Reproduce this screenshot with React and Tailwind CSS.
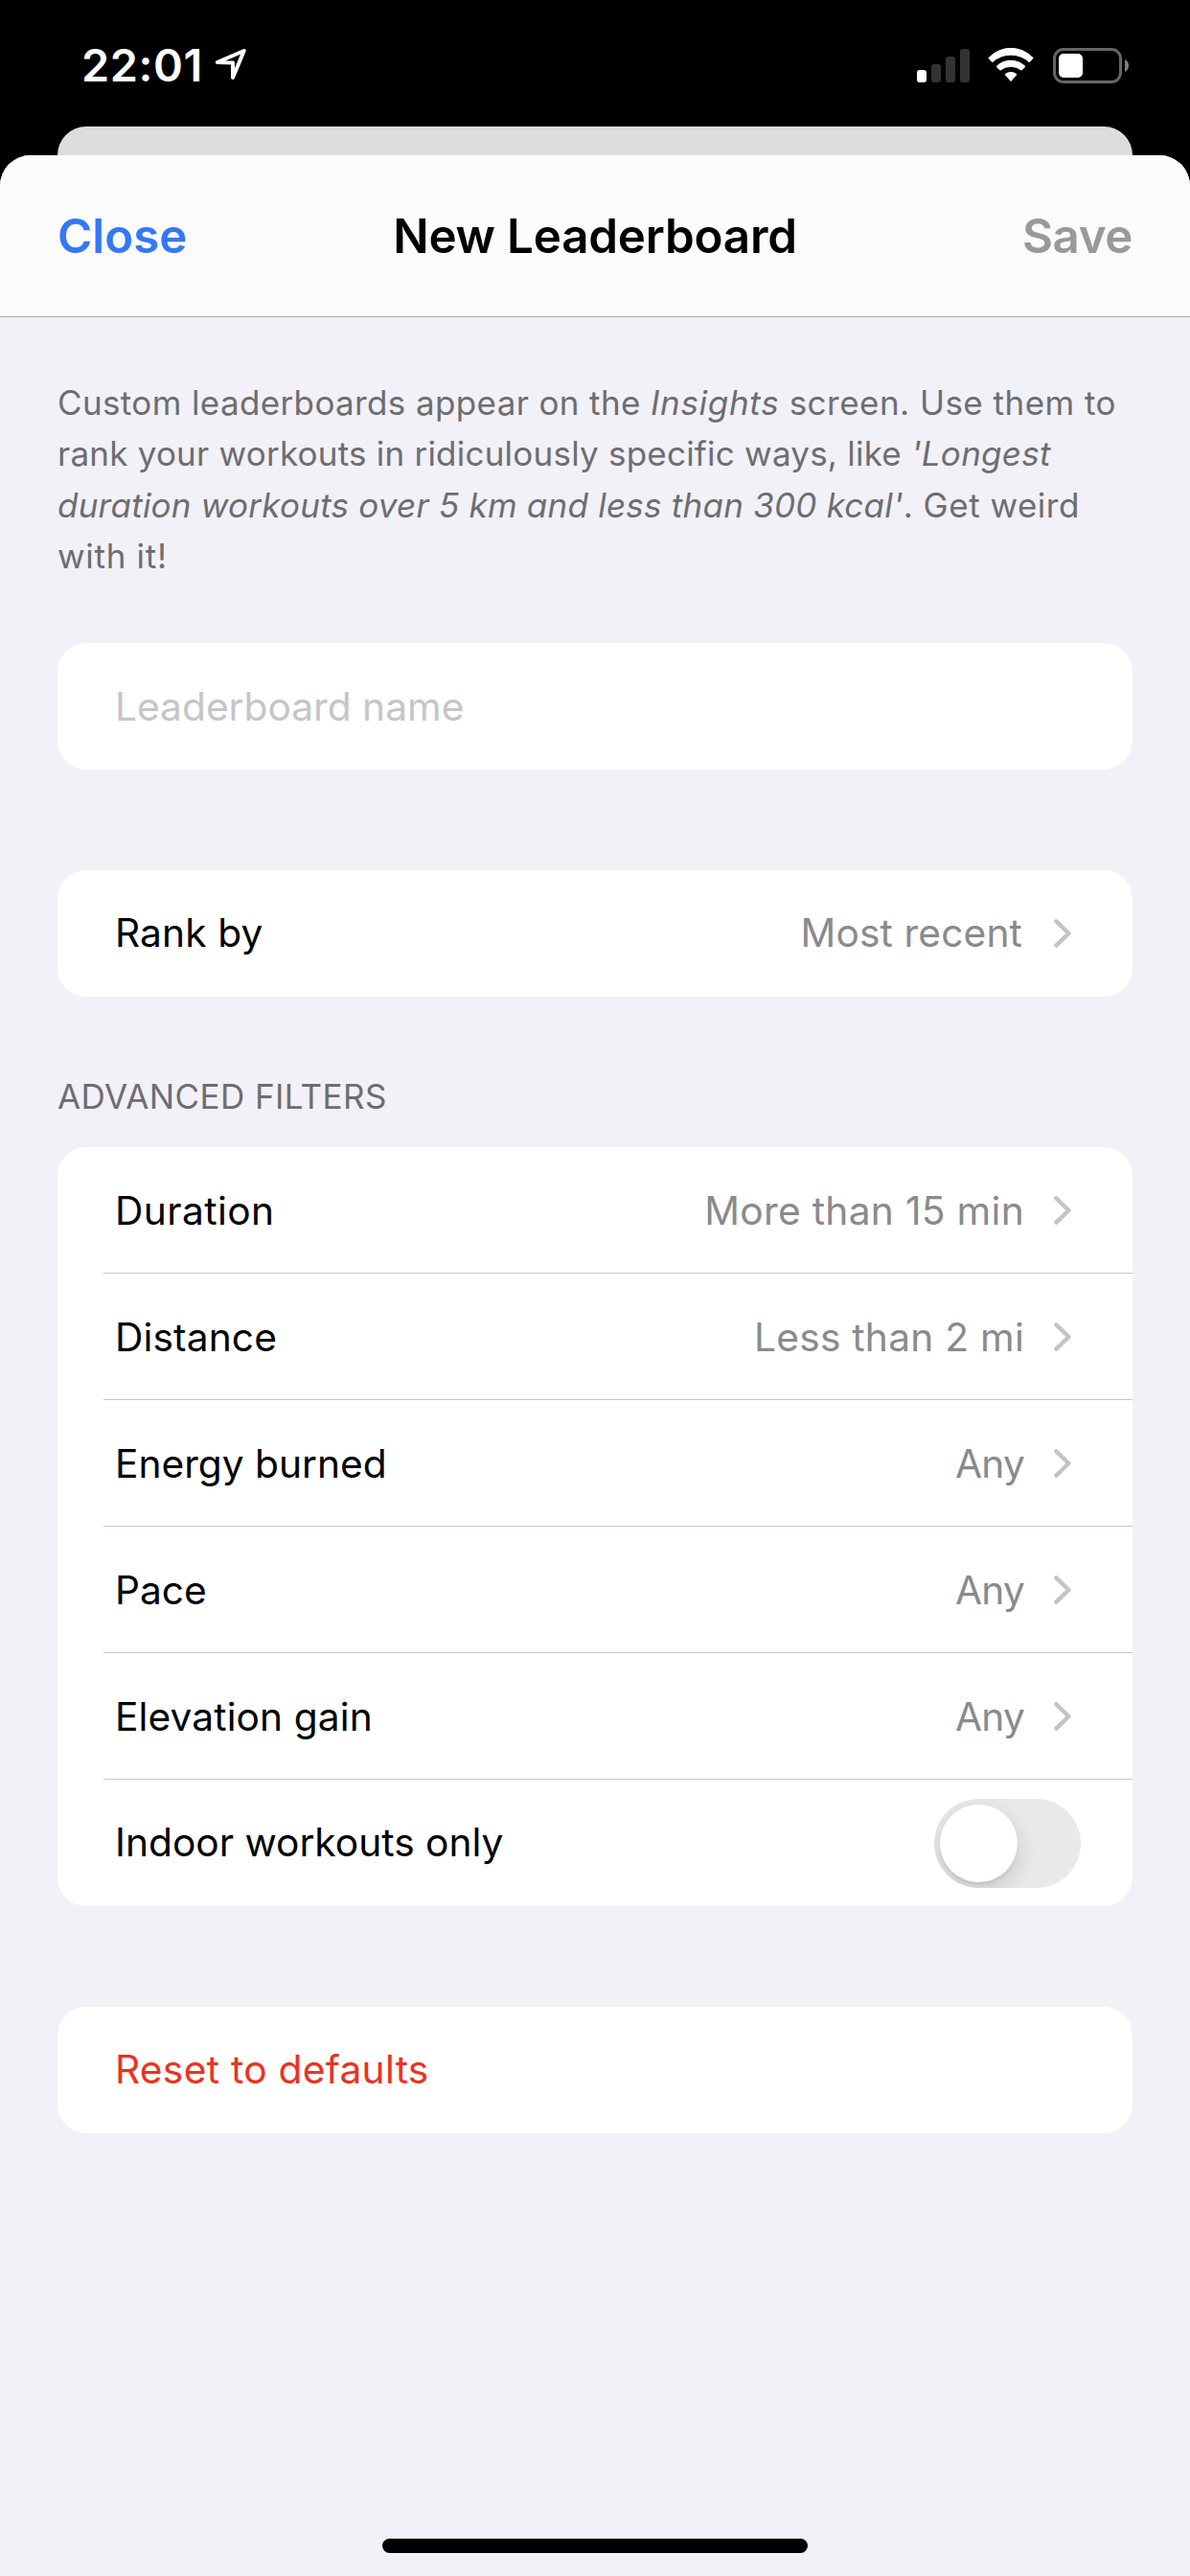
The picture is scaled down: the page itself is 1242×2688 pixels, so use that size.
import React from "react";

function LocationIcon() {
  return (
    <svg width="60" height="60" viewBox="0 0 60 60" fill="none" className="-ml-[1px]">
      <path
        d="M43.7 13 L15.8 25 L32 25.4 L32 41 Z"
        stroke="white"
        strokeWidth="4"
        strokeLinejoin="round"
      />
    </svg>
  );
}

function SignalIcon() {
  return (
    <div className="flex items-end gap-[5px]">
      <div className="h-[13px] w-[10px] rounded-[3px] bg-white" />
      <div className="h-[19px] w-[10px] rounded-[3px] bg-[#333333]" />
      <div className="h-[27px] w-[10px] rounded-[3px] bg-[#333333]" />
      <div className="h-[35px] w-[10px] rounded-[3px] bg-[#333333]" />
    </div>
  );
}

function WifiIcon() {
  return (
    <svg width="48" height="36" viewBox="0 0 48 36" fill="white" stroke="white" strokeWidth="1" strokeLinejoin="round">
      <path d="M0.8 10.6 A31.4 31.4 0 0 1 47.2 10.6 L43.4 14.7 A28.8 28.8 0 0 0 4.6 14.7 Z" />
      <path d="M9 19.4 A21.4 21.4 0 0 1 39 19.4 L35.1 23.2 A18 18 0 0 0 12.9 23.2 Z" />
      <path d="M18 27.6 A9.6 9.6 0 0 1 30 27.6 L24 34.6 Z" />
    </svg>
  );
}

function BatteryIcon() {
  return (
    <div className="flex items-center gap-[3px]">
      <div className="flex h-[37px] w-[72px] items-center rounded-[11px] border-[3px] border-[#666666] pl-[3px]">
        <div className="h-[25px] w-[25px] rounded-[5px] bg-white" />
      </div>
      <svg width="4" height="13" viewBox="0 0 4 13" fill="#808080">
        <path d="M0 0 C2.4 1 4 3.4 4 6.5 C4 9.6 2.4 12 0 13 Z" />
      </svg>
    </div>
  );
}

function StatusBar() {
  return (
    <div className="flex h-[132px] items-start justify-between pr-16 pl-[85px]">
      <div className="flex h-[136px] items-center text-white">
        <span className="text-[46.8px] font-semibold tracking-[0.57px]">22:01</span>
        <div className="mt-1">
          <LocationIcon />
        </div>
      </div>
      <div className="flex h-[136px] items-center">
        <div className="mr-[19px]">
          <SignalIcon />
        </div>
        <div className="mr-[20px]">
          <WifiIcon />
        </div>
        <BatteryIcon />
      </div>
    </div>
  );
}

function Header() {
  return (
    <header className="grid h-[169px] grid-cols-[1fr_auto_1fr] items-center rounded-t-[32px] border-b border-[#a9a9ad] bg-[#fbfbfc] px-[60px] text-[49.3px] font-semibold">
      <button className="mt-[2px] justify-self-start text-[#3478f6]">Close</button>
      <h1 className="mt-[1px] tracking-[-0.19px] text-black">New Leaderboard</h1>
      <button className="mt-[2px] justify-self-end tracking-[-0.4px] text-[#999999]">Save</button>
    </header>
  );
}

function Intro() {
  return (
    <p className="h-[277px] text-[35px] leading-[53.33px] whitespace-pre text-[#6d6d72]">
      <span className="tracking-[0.37px]">Custom leaderboards appear on the </span>
      <em className="tracking-[0.7px]">Insights</em>
      <span className="tracking-[0.47px]"> screen. Use them to</span>
      <br />
      <span className="tracking-[0.225px]">rank your workouts in ridiculously specific ways, like </span>
      <em className="tracking-[0.28px]">'Longest</em>
      <br />
      <em className="tracking-[0.23px]">duration workouts over 5 km and less than 300 kcal'</em>
      <span className="tracking-[0.5px]">. Get weird</span>
      <br />
      <span className="tracking-[0.7px]">with it!</span>
    </p>
  );
}

function Card({ children, className = "" }) {
  return <section className={"rounded-[30px] bg-white text-[40.7px] " + className}>{children}</section>;
}

function Chevron() {
  return (
    <svg width="18" height="30" viewBox="0 0 18 30" fill="none" className="ml-[31px]">
      <path d="M2.4 2.4 L15.4 15 L2.4 27.6" stroke="#c4c4c6" strokeWidth="4.4" strokeLinecap="round" strokeLinejoin="round" />
    </svg>
  );
}

function Toggle() {
  return (
    <div role="switch" aria-checked="false" className="mt-[1px] flex h-[93px] w-[153px] items-center overflow-hidden rounded-full bg-[#e9e9ea] p-[6px]">
      <div className="h-[81px] w-[81px] rounded-full bg-white shadow-[0_9px_24px_rgba(0,0,0,0.15),0_3px_3px_rgba(0,0,0,0.06)]" />
    </div>
  );
}

function Row({ label, value, labelClass = "", valueClass = "", last = false, children }) {
  return (
    <div className="h-[132px] pl-12">
      <div className={"flex h-full items-center pl-3 " + (last ? "" : "border-b border-[#c6c6c8] pt-[2px]")}>
        <span className={"mr-auto " + labelClass}>{label}</span>
        {value && (
          <div className="mr-[64px] flex items-center">
            <span className={"text-[#8a8a8d] " + valueClass}>{value}</span>
            <Chevron />
          </div>
        )}
        {children}
      </div>
    </div>
  );
}

const filters = [
  { label: "Duration", value: "More than 15 min", labelClass: "tracking-[0.41px]", valueClass: "tracking-[0.3px]" },
  { label: "Distance", value: "Less than 2 mi", labelClass: "tracking-[0.13px]", valueClass: "tracking-[0.25px]" },
  { label: "Energy burned", value: "Any", valueClass: "tracking-[-0.8px]" },
  { label: "Pace", value: "Any", valueClass: "tracking-[-0.8px]" },
  { label: "Elevation gain", value: "Any", labelClass: "tracking-[0.1px]", valueClass: "tracking-[-0.8px]" },
];

export default function App() {
  return (
    <div className="flex h-[2688px] w-[1242px] flex-col overflow-hidden bg-black font-['Inter','Liberation_Sans',sans-serif] text-black">
      <StatusBar />
      <div className="mx-[60px] h-[30px] shrink-0 rounded-t-[30px] bg-[#dddddd]" />
      <div className="flex flex-1 flex-col rounded-t-[32px] bg-[#f2f1f7]">
        <Header />
        <main className="flex flex-1 flex-col px-[60px] pt-[63px]">
          <Intro />
          <Card>
            <input
              placeholder="Leaderboard name"
              className="h-[132px] w-full bg-transparent px-[60px] outline-none placeholder:text-[#c5c5c7]"
            />
          </Card>
          <Card className="mt-[105px]">
            <Row label="Rank by" value="Most recent" labelClass="tracking-[0.12px]" valueClass="mr-[2px] tracking-[0.12px]" last />
          </Card>
          <h2 className="mt-[77px] h-[80px] text-[35px] leading-[54px] tracking-[0.41px] text-[#6d6d72]">
            ADVANCED FILTERS
          </h2>
          <Card>
            {filters.map((f) => (
              <Row key={f.label} {...f} />
            ))}
            <Row label="Indoor workouts only" last>
              <div className="mr-[54px]">
                <Toggle />
              </div>
            </Row>
          </Card>
          <Card className="mt-[105px]">
            <button className="flex h-[132px] w-full items-center px-[60px] tracking-[0.28px] text-[#eb3223]">
              Reset to defaults
            </button>
          </Card>
          <div className="mt-auto mb-6 h-[15px] w-[444px] self-center rounded-full bg-black" />
        </main>
      </div>
    </div>
  );
}
